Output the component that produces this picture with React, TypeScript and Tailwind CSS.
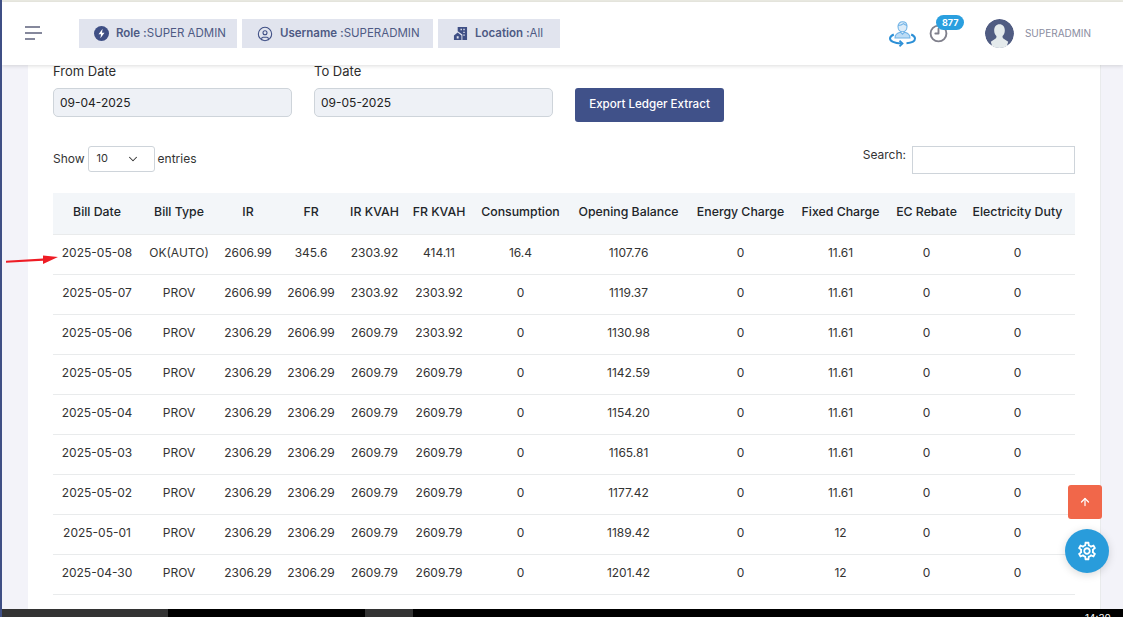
import { ArrowUp, ChevronDown, CircleUser, Clock9 } from "lucide-react";
import { MdOutlineSettings } from "react-icons/md";

const font = "font-['Inter','Noto_Sans',sans-serif]";

const columns = [
    { name: "Bill Date", width: "w-[88px]" },
    { name: "Bill Type", width: "w-[76px]" },
    { name: "IR", width: "w-[62px]" },
    { name: "FR", width: "w-[64px]" },
    { name: "IR KVAH", width: "w-[63px]" },
    { name: "FR KVAH", width: "w-[66px]" },
    { name: "Consumption", width: "w-[97px]" },
    { name: "Opening Balance", width: "w-[119px]" },
    { name: "Energy Charge", width: "w-[105px]" },
    { name: "Fixed Charge", width: "w-[95px]" },
    { name: "EC Rebate", width: "w-[77px]" },
    { name: "Electricity Duty", width: "w-[110px]" },
];

const rows = [
    ["2025-05-08", "OK(AUTO)", "2606.99", "345.6", "2303.92", "414.11", "16.4", "1107.76", "0", "11.61", "0", "0"],
    ["2025-05-07", "PROV", "2606.99", "2606.99", "2303.92", "2303.92", "0", "1119.37", "0", "11.61", "0", "0"],
    ["2025-05-06", "PROV", "2306.29", "2606.99", "2609.79", "2303.92", "0", "1130.98", "0", "11.61", "0", "0"],
    ["2025-05-05", "PROV", "2306.29", "2306.29", "2609.79", "2609.79", "0", "1142.59", "0", "11.61", "0", "0"],
    ["2025-05-04", "PROV", "2306.29", "2306.29", "2609.79", "2609.79", "0", "1154.20", "0", "11.61", "0", "0"],
    ["2025-05-03", "PROV", "2306.29", "2306.29", "2609.79", "2609.79", "0", "1165.81", "0", "11.61", "0", "0"],
    ["2025-05-02", "PROV", "2306.29", "2306.29", "2609.79", "2609.79", "0", "1177.42", "0", "11.61", "0", "0"],
    ["2025-05-01", "PROV", "2306.29", "2306.29", "2609.79", "2609.79", "0", "1189.42", "0", "12", "0", "0"],
    ["2025-04-30", "PROV", "2306.29", "2306.29", "2609.79", "2609.79", "0", "1201.42", "0", "12", "0", "0"],
];

function BoltIcon() {
    return (
        <svg viewBox="0 0 16 16" className="h-[15px] w-[15px]">
            <circle cx="8" cy="8" r="8" fill="#3f4f85" />
            <path d="M9.2 3 4.8 8.8h2.7L6.800 13l4.400-5.900H8.500z" fill="#fff" />
        </svg>
    );
}

function BuildingIcon() {
    return (
        <svg viewBox="0 0 16 16" className="h-[15px] w-[15px]" fill="#3f4f85">
            <path d="M5 1h10v14H10V9L5 5.500z" />
            <path d="M1 10 5 6.800 9 10v5H1z" />
            <path d="M8 3h1.500v1.500H8zM11 3h1.500v1.500H11zM11 6h1.500v1.500H11zM11 9h1.500v1.500H11zM4 11h2v2.200H4z" fill="#e1e4ee" />
        </svg>
    );
}

function RotateUserIcon() {
    return (
        <svg viewBox="0 0 27 26" className="h-[26px] w-[27px]" fill="none" stroke="#6fb2e6" strokeWidth="1.100">
            <path d="M9 5.500C9 2.500 11 .8 13.500.8S18 2.500 18 5.500c0 3-2 5.300-4.500 5.300S9 8.500 9 5.500z" fill="#dcecf9" />
            <path d="M9 4.500c2 0 4-.5 5.500-1.800 1 1 2.200 1.600 3.500 1.800" />
            <path d="M6 17c0-3.600 2.500-5.200 5.500-5.800l2 2 2-2c3 .6 5.500 2.200 5.500 5.800z" fill="#bcdcf5" />
            <path d="M4.800 13.500C2.300 14.700 1 16 1 17.500c0 2.600 4.500 4.800 11 5" stroke="#2b8fd6" strokeWidth="2" />
            <path d="M22.200 13.500c2.500 1.200 3.800 2.500 3.800 4 0 2.300-3.400 4.300-8.500 4.800" stroke="#2b8fd6" strokeWidth="2" />
            <path d="m10.500 19.700 3 2.800-3 2.800" stroke="#2b8fd6" strokeWidth="1.800" />
        </svg>
    );
}

function AvatarIcon() {
    return (
        <svg viewBox="0 0 30 30" className="h-[29px] w-[29px] rounded-full">
            <circle cx="15" cy="15" r="15" fill="#505c82" />
            <path d="M15 5.500c-3.400 0-5.500 2.600-5.500 6.300 0 2.500 1 4.500 2.300 5.700.3 1.500-.3 2.500-1.500 3.100L6 23.500 8 30h14l2-6.500-4.300-2.900c-1.200-.6-1.800-1.600-1.500-3.100 1.300-1.200 2.300-3.200 2.300-5.700 0-3.700-2.100-6.300-5.500-6.300z" fill="#e4eaec" />
        </svg>
    );
}

function HeaderChip({ icon, label, value, width }: { icon: React.ReactNode; label: string; value: string; width: string }) {
    return (
        <div className={`${width} flex h-[29px] items-center gap-[7px] bg-[#e1e4ee] pl-[15px] text-[11.5px] text-[#4e5a84]`}>
            {icon}
            <span className="whitespace-nowrap">
                <span className="font-semibold">{label} :</span>
                {value}
            </span>
        </div>
    );
}

function DateField({ label, value }: { label: string; value: string }) {
    return (
        <div className="flex w-[239px] flex-col gap-[11px]">
            <label className="text-[13px] leading-[12px] text-[#2d2d2d]">{label}</label>
            <div className="flex h-[29px] items-center rounded-[5px] border border-[#ced4da] bg-[#eef1f6] px-[6px] text-[12px] text-[#222]">
                {value}
            </div>
        </div>
    );
}

export default function App() {
    return (
        <div className={`${font} relative flex h-[617px] w-[1123px] flex-col overflow-hidden border-l-2 border-[#3f4f85] bg-[#f3f3f9] text-[#333]`}>
            <div className="absolute -left-[2px] top-0 h-[2px] w-[1123px] bg-[#ecece4]" />

            <header className="z-10 mt-[2px] flex h-[63px] shrink-0 items-center bg-white pl-[23px] pr-[32px] shadow-[0_1px_4px_rgba(0,0,0,0.14)]">
                <div className="-mt-[2px] flex w-[54px] flex-col gap-[4px]">
                    <span className="h-[2px] w-[15px] bg-[#85889c]" />
                    <span className="h-[2px] w-[17px] bg-[#85889c]" />
                    <span className="h-[2px] w-[10px] bg-[#85889c]" />
                </div>
                <div className="flex gap-[5px]">
                    <HeaderChip width="w-[158px]" icon={<BoltIcon />} label="Role" value="SUPER ADMIN" />
                    <HeaderChip width="w-[191px]" icon={<CircleUser size={16} strokeWidth={1.6} color="#3f4f85" />} label="Username" value="SUPERADMIN" />
                    <HeaderChip width="w-[122px]" icon={<BuildingIcon />} label="Location" value="All" />
                </div>
                <div className="ml-auto flex items-center">
                    <RotateUserIcon />
                    <div className="relative ml-[13px] mr-[37px]">
                        <Clock9 size={19} strokeWidth={2.4} color="#80808c" />
                        <span className="absolute -top-[9px] left-[7px] rounded-full bg-[#2a9fdf] px-[6px] text-[9px] font-bold leading-[15px] text-white">877</span>
                    </div>
                    <AvatarIcon />
                    <span className="ml-[11px] text-[10px] text-[#8a8d9f]">SUPERADMIN</span>
                </div>
            </header>

            <main className="ml-[26px] mr-[22px] flex-1 border-r border-[#e9ebec] bg-white pl-[25px] pr-[25px]">
                <div className="flex items-start gap-[22px]">
                    <DateField label="From Date" value="09-04-2025" />
                    <DateField label="To Date" value="09-05-2025" />
                    <button className="mt-[23px] h-[34px] w-[149px] rounded-[3px] bg-[#405189] text-[11.6px] font-medium text-white">
                        Export Ledger Extract
                    </button>
                </div>

                <div className="mt-[24px] flex items-start justify-between">
                    <div className="flex items-center gap-[3px] text-[12px]">
                        <span>Show</span>
                        <div className="flex h-[26px] w-[67px] items-center justify-between rounded-[3px] border border-[#ced4da] pl-[8px] pr-[14px]">
                            <span className="-mt-[2px] text-[11px]">10</span>
                            <ChevronDown size={14} strokeWidth={1.8} color="#333" />
                        </div>
                        <span>entries</span>
                    </div>
                    <div className="flex items-start gap-[6px] text-[12px]">
                        <span>Search:</span>
                        <div className="h-[28px] w-[163px] border border-[#ced4da] bg-white" />
                    </div>
                </div>

                <table className="mt-[19px] w-[1022px] table-fixed border-collapse text-center text-[12px]">
                    <thead>
                        <tr className="h-[41px] border-b border-[#e9ebec] bg-[#f3f6f9] text-[12.3px] text-[#212529]">
                            {columns.map((col, i) => (
                                <th key={col.name} className={`${col.width} whitespace-nowrap pb-[2px] font-medium ${i === 11 ? "pr-[5px]" : ""}`}>{col.name}</th>
                            ))}
                        </tr>
                    </thead>
                    <tbody>
                        {rows.map((row) => (
                            <tr key={row[0]} className="h-[40px] border-b border-[#e9ebec] text-[#333]">
                                {row.map((cell, i) => (
                                    <td key={i} className={i === 11 ? "whitespace-nowrap pb-[2px] pr-[5px]" : "whitespace-nowrap pb-[2px]"}>{cell}</td>
                                ))}
                            </tr>
                        ))}
                    </tbody>
                </table>
            </main>

            <svg viewBox="0 0 54 12" className="absolute left-[4px] top-[254px] h-[12px] w-[54px]">
                <path d="M0 6.800 37 4.500 37 1.500 52 3 37 10 37 6.800 0 8.800z" fill="#ee1c25" />
            </svg>

            <button className="absolute left-[1066px] top-[485px] flex h-[34px] w-[34px] items-center justify-center rounded-[3px] bg-[#f1674a] text-white">
                <ArrowUp size={12} strokeWidth={2.5} />
            </button>
            <button className="absolute left-[1063px] top-[529px] flex h-[44px] w-[44px] items-center justify-center rounded-full bg-[#299cdb] text-white shadow-[0_2px_8px_rgba(0,0,0,0.15)]">
                <MdOutlineSettings size={22} />
            </button>

            <footer className="absolute -left-[2px] bottom-0 flex h-[8px] w-[1123px] bg-black">
                <span className="h-full w-[168px] bg-[#333]" />
                <span className="ml-[197px] h-full w-[48px] bg-[#333]" />
                <span className="absolute left-[1085px] top-[4px] text-[10px] leading-[10px] text-white">14:30</span>
            </footer>
        </div>
    );
}
